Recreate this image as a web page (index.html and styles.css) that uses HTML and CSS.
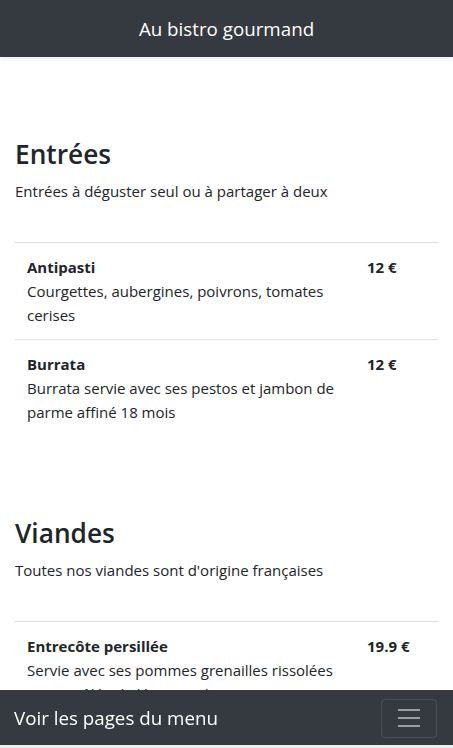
FILE: index.html
```html
<!DOCTYPE html>
<html lang="fr">
<head>
<meta charset="utf-8">
<title>Au bistro gourmand</title>
<link rel="stylesheet" href="styles.css">
</head>
<body>
<header class="topbar">
  <span class="brand">Au bistro gourmand</span>
</header>
<main class="container">
  <section class="section">
    <h3 class="section-title">Entrées</h3>
    <p class="section-desc">Entrées à déguster seul ou à partager à deux</p>
    <ul class="dish-list">
      <li class="dish">
        <div class="dish-info">
          <div class="dish-name">Antipasti</div>
          <div class="dish-desc">Courgettes, aubergines, poivrons, tomates cerises</div>
        </div>
        <div class="dish-price">12 €</div>
      </li>
      <li class="dish">
        <div class="dish-info">
          <div class="dish-name">Burrata</div>
          <div class="dish-desc">Burrata servie avec ses pestos et jambon de parme affiné 18 mois</div>
        </div>
        <div class="dish-price">12 €</div>
      </li>
    </ul>
  </section>
  <section class="section">
    <h3 class="section-title">Viandes</h3>
    <p class="section-desc">Toutes nos viandes sont d'origine françaises</p>
    <ul class="dish-list">
      <li class="dish">
        <div class="dish-info">
          <div class="dish-name">Entrecôte persillée</div>
          <div class="dish-desc">Servie avec ses pommes grenailles rissolées et sa poêlée de légumes du moment</div>
        </div>
        <div class="dish-price">19.9 €</div>
      </li>
    </ul>
  </section>
</main>
<nav class="bottombar">
  <span class="brand">Voir les pages du menu</span>
  <button class="toggler" type="button" aria-label="Menu">
    <svg width="30" height="30" viewBox="0 0 30 30"><path stroke="rgba(255,255,255,0.5)" stroke-width="2" stroke-linecap="butt" d="M4 7h22M4 15h22M4 23h22"/></svg>
  </button>
</nav>
</body>
</html>
```
FILE: styles.css
```css
html, body {
  margin: 0;
  padding: 0;
}
body {
  font-family: "Open Sans", "Noto Sans", "Liberation Sans", sans-serif;
  font-size: 15px;
  line-height: 24px;
  color: #212529;
  background: #fff;
}
.topbar {
  height: 57px;
  box-sizing: border-box;
  padding-top: 14px;
  background: #343a40;
  text-align: center;
  box-shadow: 0 2px 4px rgba(0, 0, 0, 0.075);
}
.brand {
  color: #fff;
  font-size: 18.75px;
  line-height: 30px;
}
.container {
  padding: 0 15px 80px;
}
.section {
  padding-top: 80px;
}
.section-title {
  margin: 0 0 8px;
  padding-top: 1px;
  font-size: 26.25px;
  line-height: 33px;
  font-weight: 600;
}
.section-desc {
  margin: 0 0 39px;
}
.dish-list {
  list-style: none;
  margin: 0;
  padding: 0;
}
.dish {
  display: grid;
  grid-template-columns: 310px 1fr;
  column-gap: 30px;
  padding: 12px;
  border-top: 1px solid rgba(0, 0, 0, 0.125);
}
.dish-name,
.dish-price {
  font-weight: 700;
}
.bottombar {
  position: fixed;
  left: 0;
  right: 0;
  bottom: 3px;
  height: 55px;
  box-sizing: border-box;
  padding: 0 16px 0 14px;
  background: #343a40;
  display: flex;
  align-items: center;
  justify-content: space-between;
  box-shadow: 0 3px 0 #eeeff0;
}
.toggler {
  width: 56px;
  height: 39px;
  padding: 0;
  margin-top: 1px;
  background: transparent;
  border: 1px solid rgba(255, 255, 255, 0.1);
  border-radius: 4px;
  display: flex;
  align-items: center;
  justify-content: center;
}
.toggler svg {
  display: block;
}
```
